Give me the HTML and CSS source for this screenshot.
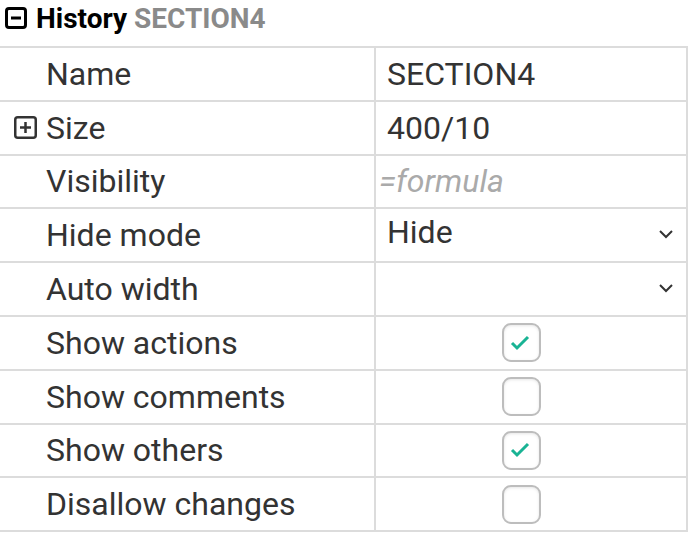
FILE: index.html
```html
<!DOCTYPE html>
<html lang="en">
<head>
    <meta charset="UTF-8">
    <title>Property grid</title>
    <link rel="stylesheet" href="styles.css">
</head>
<body>

    <div class="group-title">
        <span class="toggle">
            <svg width="22" height="22" viewBox="0 0 22 22"><rect x="1.5" y="1.5" width="19" height="19" rx="2.5" fill="none" stroke="#000" stroke-width="3"/><path d="M6 11h10" stroke="#000" stroke-width="3"/></svg>
        </span>
        <span class="group-name">History</span>
        <span class="group-obj">SECTION4</span>
    </div>

    <div class="grid">
        <div class="row">
            <div class="label">Name</div>
            <div class="value">SECTION4</div>
        </div>
        <div class="row">
            <div class="label">
                <span class="expand">
                    <svg width="23" height="23" viewBox="0 0 23 23"><rect x="1.25" y="1.25" width="20.5" height="20.5" rx="2.5" fill="none" stroke="#333" stroke-width="2.5"/><path d="M6 11.5h11M11.5 6v11" stroke="#333" stroke-width="2.5"/></svg>
                </span>
                Size
            </div>
            <div class="value">400/10</div>
        </div>
        <div class="row">
            <div class="label">Visibility</div>
            <div class="value placeholder">=formula</div>
        </div>
        <div class="row">
            <div class="label">Hide mode</div>
            <div class="value select">
                <span class="sel-text">Hide</span>
                <svg class="chev" width="16" height="10" viewBox="0 0 16 10"><path d="M2 2l6 6 6-6" fill="none" stroke="#333" stroke-width="2"/></svg>
            </div>
        </div>
        <div class="row">
            <div class="label">Auto width</div>
            <div class="value select">
                <span class="sel-text"></span>
                <svg class="chev" width="16" height="10" viewBox="0 0 16 10"><path d="M2 2l6 6 6-6" fill="none" stroke="#333" stroke-width="2"/></svg>
            </div>
        </div>
        <div class="row">
            <div class="label">Show actions</div>
            <div class="value center"><span class="check"><svg width="22" height="16" viewBox="0 0 22 16"><path d="M2 8l5 5 11-11" fill="none" stroke="#19b394" stroke-width="3"/></svg></span></div>
        </div>
        <div class="row">
            <div class="label">Show comments</div>
            <div class="value center"><span class="check"></span></div>
        </div>
        <div class="row">
            <div class="label">Show others</div>
            <div class="value center"><span class="check"><svg width="22" height="16" viewBox="0 0 22 16"><path d="M2 8l5 5 11-11" fill="none" stroke="#19b394" stroke-width="3"/></svg></span></div>
        </div>
        <div class="row">
            <div class="label">Disallow changes</div>
            <div class="value center"><span class="check"></span></div>
        </div>
    </div>

</body>
</html>
```

FILE: styles.css
```css
body {
    font-family: 'Roboto', 'Liberation Sans', sans-serif;
    background-color: #fff;
    margin: 0;
    padding: 0;
    color: #333;
}

.group-title {
    display: flex;
    align-items: center;
    height: 36px;
    padding: 0 0 0 5px;
    gap: 7px;
    font-size: 28px;
    font-weight: 700;
}

.toggle {
    display: flex;
    width: 22px;
    height: 22px;
    margin-right: 2px;
}

.group-name {
    color: #000;
}

.group-obj {
    color: #8a8a8a;
}

.grid {
    margin-top: 10px;
    width: 688px;
}

.row {
    display: grid;
    grid-template-columns: 376px 1fr;
    border-top: 2px solid #dcdcdc;
    border-right: 2px solid #dcdcdc;
    height: 51.8px;
}

.row:last-child {
    border-bottom: 2px solid #dcdcdc;
}

.label {
    position: relative;
    display: flex;
    align-items: center;
    padding-left: 46px;
    font-size: 32px;
    color: #333;
    border-right: 2px solid #dcdcdc;
}

.expand {
    position: absolute;
    left: 14px;
    top: 14px;
    display: flex;
}

.value {
    display: flex;
    align-items: center;
    padding-left: 11px;
    font-size: 32px;
    color: #333;
}

.placeholder {
    font-style: italic;
    color: #aaa;
    padding-left: 3px;
}

.select {
    justify-content: space-between;
    padding-right: 12px;
    align-items: flex-start;
    padding-top: 4px;
}

.chev {
    margin-top: 16px;
}

.center {
    justify-content: center;
    padding-left: 0;
    padding-right: 20px;
}

.check {
    display: flex;
    align-items: center;
    justify-content: center;
    width: 35px;
    height: 35px;
    border: 2px solid #bdbdbd;
    border-radius: 9px;
    box-shadow: inset 0 1px 3px rgba(0, 0, 0, 0.1);
}
```
